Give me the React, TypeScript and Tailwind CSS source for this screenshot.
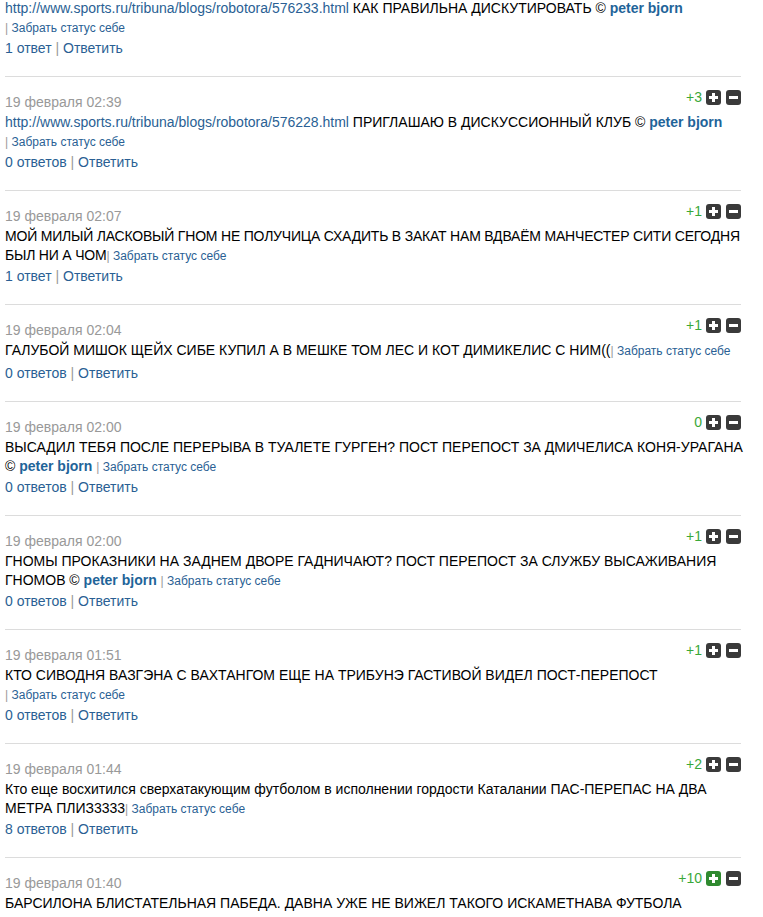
import React from "react";

type Part = { t: string; kind?: "link" | "author" };

type Post = {
  date: string;
  score: string;
  voted?: boolean;
  tight?: boolean;
  parts: Part[];
  gap?: boolean; // space before the "|"
  replies: string;
};

const posts: Post[] = [
  {
    date: "19 февраля 02:41",
    score: "+2",
    parts: [
      { t: "http://www.sports.ru/tribuna/blogs/robotora/576233.html", kind: "link" },
      { t: " КАК ПРАВИЛЬНА ДИСКУТИРОВАТЬ © " },
      { t: "peter bjorn", kind: "author" },
    ],
    gap: true,
    replies: "1 ответ",
  },
  {
    date: "19 февраля 02:39",
    score: "+3",
    parts: [
      { t: "http://www.sports.ru/tribuna/blogs/robotora/576228.html", kind: "link" },
      { t: " ПРИГЛАШАЮ В ДИСКУССИОННЫЙ КЛУБ © " },
      { t: "peter bjorn", kind: "author" },
    ],
    gap: true,
    replies: "0 ответов",
  },
  {
    date: "19 февраля 02:07",
    score: "+1",
    tight: true,
    parts: [
      {
        t: "МОЙ МИЛЫЙ ЛАСКОВЫЙ ГНОМ НЕ ПОЛУЧИЦА СХАДИТЬ В ЗАКАТ НАМ ВДВАЁМ МАНЧЕСТЕР СИТИ СЕГОДНЯ БЫЛ НИ А ЧОМ",
      },
    ],
    replies: "1 ответ",
  },
  {
    date: "19 февраля 02:04",
    score: "+1",
    parts: [
      { t: "ГАЛУБОЙ МИШОК ЩЕЙХ СИБЕ КУПИЛ А В МЕШКЕ ТОМ ЛЕС И КОТ ДИМИКЕЛИС С НИМ((" },
    ],
    replies: "0 ответов",
  },
  {
    date: "19 февраля 02:00",
    score: "0",
    parts: [
      {
        t: "ВЫСАДИЛ ТЕБЯ ПОСЛЕ ПЕРЕРЫВА В ТУАЛЕТЕ ГУРГЕН? ПОСТ ПЕРЕПОСТ ЗА ДМИЧЕЛИСА КОНЯ-УРАГАНА © ",
      },
      { t: "peter bjorn", kind: "author" },
    ],
    gap: true,
    replies: "0 ответов",
  },
  {
    date: "19 февраля 02:00",
    score: "+1",
    parts: [
      {
        t: "ГНОМЫ ПРОКАЗНИКИ НА ЗАДНЕМ ДВОРЕ ГАДНИЧАЮТ? ПОСТ ПЕРЕПОСТ ЗА СЛУЖБУ ВЫСАЖИВАНИЯ ГНОМОВ © ",
      },
      { t: "peter bjorn", kind: "author" },
    ],
    gap: true,
    replies: "0 ответов",
  },
  {
    date: "19 февраля 01:51",
    score: "+1",
    parts: [
      { t: "КТО СИВОДНЯ ВАЗГЭНА С ВАХТАНГОМ ЕЩЕ НА ТРИБУНЭ ГАСТИВОЙ ВИДЕЛ ПОСТ-ПЕРЕПОСТ " },
    ],
    replies: "0 ответов",
  },
  {
    date: "19 февраля 01:44",
    score: "+2",
    parts: [
      {
        t: "Кто еще восхитился сверхатакующим футболом в исполнении гордости Каталании ПАС-ПЕРЕПАС НА ДВА МЕТРА ПЛИЗ3333",
      },
    ],
    replies: "8 ответов",
  },
  {
    date: "19 февраля 01:40",
    score: "+10",
    voted: true,
    parts: [{ t: "БАРСИЛОНА БЛИСТАТЕЛЬНАЯ ПАБЕДА. ДАВНА УЖЕ НЕ ВИЖЕЛ ТАКОГО ИСКАМЕТНАВА ФУТБОЛА" }],
    replies: "0 ответов",
  },
];

function VoteBtn({ minus, green }: { minus?: boolean; green?: boolean }) {
  return (
    <span
      className={
        "flex w-[15px] h-[15px] items-center justify-center rounded-[3px] " +
        (green ? "bg-[#2f8a2f]" : "bg-[#3a3a3a]")
      }
    >
      <svg width="9" height="9" viewBox="0 0 9 9">
        <rect x="0" y="3" width="9" height="3" fill="#fff" />
        {!minus && <rect x="3" y="0" width="3" height="9" fill="#fff" />}
      </svg>
    </span>
  );
}

function PostRow({ post }: { post: Post }) {
  return (
    <div className="border-b border-[#dcdcdc] pt-[15px] pb-[18px]">
      <div className="flex items-start justify-between">
        <div className="h-5 leading-5 text-[14px] text-[#999]">{post.date}</div>
        <div className="flex items-center gap-[5px] -mt-[2px]">
          <span className="text-[14px] leading-[15px] text-[#3aa83a] mr-[-1px]">{post.score}</span>
          <VoteBtn green={post.voted} />
          <VoteBtn minus />
        </div>
      </div>
      <div
        className={
          "mt-px -mr-[16px] min-h-[22px] text-[14px] leading-[19px] text-black " +
          (post.tight ? "tracking-[-0.2px]" : "")
        }
      >
        {post.parts.map((p, i) =>
          p.kind === "link" ? (
            <a key={i} className="text-[#2a5f94]">{p.t}</a>
          ) : p.kind === "author" ? (
            <a key={i} className="font-bold text-[#1f6499]">{p.t}</a>
          ) : (
            <span key={i}>{p.t}</span>
          )
        )}
        {post.gap && " "}
        <wbr />
        <span className="text-[12px] whitespace-nowrap tracking-normal">
          <span className="text-[#999]">| </span>
          <a className="text-[#2a5f94]">Забрать статус себе</a>
        </span>
      </div>
      <div className="h-5 leading-5 text-[14px] text-[#2a5f94]">
        <a>{post.replies}</a>
        <span className="text-[#999]"> | </span>
        <a>Ответить</a>
      </div>
    </div>
  );
}

export default function App() {
  return (
    <div className="w-[763px] h-[917px] overflow-hidden bg-white font-['Liberation_Sans',Arial,sans-serif]">
      <div className="pl-[5px] w-[741px] -mt-[37px]">
        {posts.map((p, i) => (
          <PostRow key={i} post={p} />
        ))}
      </div>
    </div>
  );
}
